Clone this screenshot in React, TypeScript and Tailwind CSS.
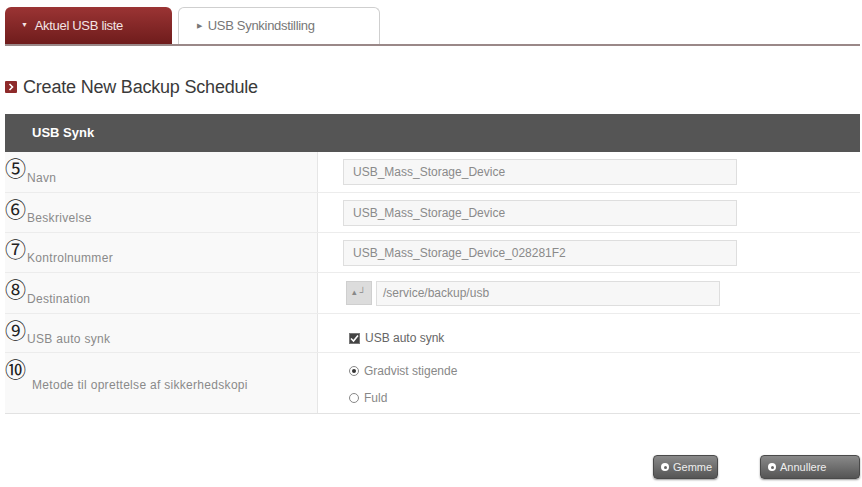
import React from "react";

const rows = [
  { n: "⑤", label: "Navn", h: "h-[41px]", pt: "pt-[11px]", kind: "input", value: "USB_Mass_Storage_Device" },
  { n: "⑥", label: "Beskrivelse", h: "h-[40px]", pt: "pt-[11px]", kind: "input", value: "USB_Mass_Storage_Device" },
  { n: "⑦", label: "Kontrolnummer", h: "h-[40px]", pt: "pt-[11px]", kind: "input", value: "USB_Mass_Storage_Device_028281F2" },
  { n: "⑧", label: "Destination", h: "h-[41px]", pt: "pt-[11px]", kind: "dest", value: "/service/backup/usb" },
  { n: "⑨", label: "USB auto synk", h: "h-[39px]", pt: "pt-[11px]", kind: "check", value: "" },
  { n: "⑩", label: "Metode til oprettelse af sikkerhedskopi", h: "h-[61px]", pt: "pt-[4px] pl-[27px]", kind: "radio", value: "" },
];

function Right({ kind, value }: { kind: string; value: string }) {
  if (kind === "input") {
    return (
      <div className="ml-[25px] w-[394px] h-[26px] bg-[#f7f7f7] border border-[#dedede] flex items-center pl-[9px] text-[12px] text-[#8a8a8a]">
        {value}
      </div>
    );
  }
  if (kind === "dest") {
    return (
      <div className="ml-[28px] flex items-center gap-[4px]">
        <div className="w-[26px] h-[24px] bg-[#dcdcdc] border border-[#cfcfcf] flex items-center justify-center text-[9px] text-[#888]">
          ▴ ┘
        </div>
        <div className="w-[344px] h-[25px] bg-[#f7f7f7] border border-[#dedede] flex items-center pl-[6px] text-[12px] text-[#8a8a8a]">
          {value}
        </div>
      </div>
    );
  }
  if (kind === "check") {
    return (
      <div className="ml-[31px] pt-[10px] flex items-center gap-[5px] text-[12px] text-[#666]">
        <div className="w-[11px] h-[11px] bg-[#444] border border-[#777] flex items-center justify-center">
          <svg width="9" height="9" viewBox="0 0 9 9">
            <path d="M1 4.5 L3.5 7 L8 1.5" stroke="#fff" strokeWidth="1.6" fill="none" />
          </svg>
        </div>
        USB auto synk
      </div>
    );
  }
  return (
    <div className="ml-[31px] flex flex-col gap-[9px] text-[12px] text-[#888] pt-[3px]">
      <div className="flex items-center gap-[5px]">
        <div className="w-[10px] h-[10px] rounded-full border border-[#888] bg-white flex items-center justify-center">
          <div className="w-[4px] h-[4px] rounded-full bg-[#333]" />
        </div>
        Gradvist stigende
      </div>
      <div className="flex items-center gap-[5px]">
        <div className="w-[10px] h-[10px] rounded-full border border-[#888] bg-white" />
        Fuld
      </div>
    </div>
  );
}

function Btn({ label, w }: { label: string; w: string }) {
  return (
    <div
      className={`${w} h-[24px] rounded-[4px] bg-gradient-to-b from-[#8a8a8a] to-[#555] border border-[#4a4a4a] shadow-[0_1px_2px_rgba(0,0,0,0.4)] flex items-center gap-[4px] pl-[7px] text-[11px] text-[#eee]`}
    >
      <div className="w-[8px] h-[8px] rounded-full bg-white flex items-center justify-center shrink-0">
        <div className="w-[3px] h-[3px] rounded-full bg-[#666]" />
      </div>
      {label}
    </div>
  );
}

export default function App() {
  return (
    <div className="w-[862px] h-[487px] bg-white pl-[5px] pr-[2px] overflow-hidden font-['Liberation_Sans',Arial,sans-serif]">
      {/* Tabs */}
      <div className="pt-[7px] flex items-end border-b-2 border-[#9a8888]">
        <div className="w-[167px] h-[37px] rounded-t-[6px] bg-gradient-to-b from-[#9b3434] to-[#6f1c1c] flex items-center pl-[16px] gap-[7px] text-[13px] text-[#f4e4e4] tracking-[-0.3px]">
          <span className="text-[7px]">▼</span>
          Aktuel USB liste
        </div>
        <div className="ml-[6px] w-[202px] h-[37px] rounded-t-[6px] border border-b-0 border-[#cfcfcf] bg-white flex items-center pl-[18px] gap-[6px] text-[13px] text-[#777] tracking-[-0.3px]">
          <span className="text-[7px]">▶</span>
          USB Synkindstilling
        </div>
      </div>

      {/* Title */}
      <div className="mt-[31px] h-[20px] flex items-center gap-[6px]">
        <div className="w-[12px] h-[12px] bg-[#8e2a2a] rounded-[1px] flex items-center justify-center">
          <svg width="8" height="8" viewBox="0 0 8 8">
            <path d="M2.5 1 L5.5 4 L2.5 7" stroke="#fff" strokeWidth="1.6" fill="none" />
          </svg>
        </div>
        <span className="text-[18px] text-[#3a3a3a] tracking-[-0.2px]">Create New Backup Schedule</span>
      </div>

      {/* Table */}
      <div className="mt-[17px] w-[855px]">
        <div className="h-[38px] bg-[#555555] flex items-center pl-[27px] text-[13px] font-bold text-white">
          USB Synk
        </div>
        {rows.map((r, i) => (
          <div
            key={i}
            className={`${r.h} flex border-b ${i === rows.length - 1 ? "border-[#e2e2e2]" : "border-[#ececec]"}`}
          >
            <div className={`relative w-[313px] shrink-0 bg-[#f9f9f9] border-r border-[#e6e6e6] flex items-center pl-[22px] ${r.pt} text-[12px] text-[#8a8a8a] tracking-[0.3px]`}>
              <span className="absolute left-0 top-[4px] text-[21px] leading-[22px] text-[#222] font-['Noto_Sans_CJK_JP',sans-serif]">
                {r.n}
              </span>
              <span>{r.label}</span>
            </div>
            <div className="flex-1 flex items-center">
              <Right kind={r.kind} value={r.value} />
            </div>
          </div>
        ))}
      </div>

      {/* Buttons */}
      <div className="mt-[41px] w-[855px] flex justify-end gap-[42px]">
        <Btn label="Gemme" w="w-[65px]" />
        <Btn label="Annullere" w="w-[100px]" />
      </div>
    </div>
  );
}
